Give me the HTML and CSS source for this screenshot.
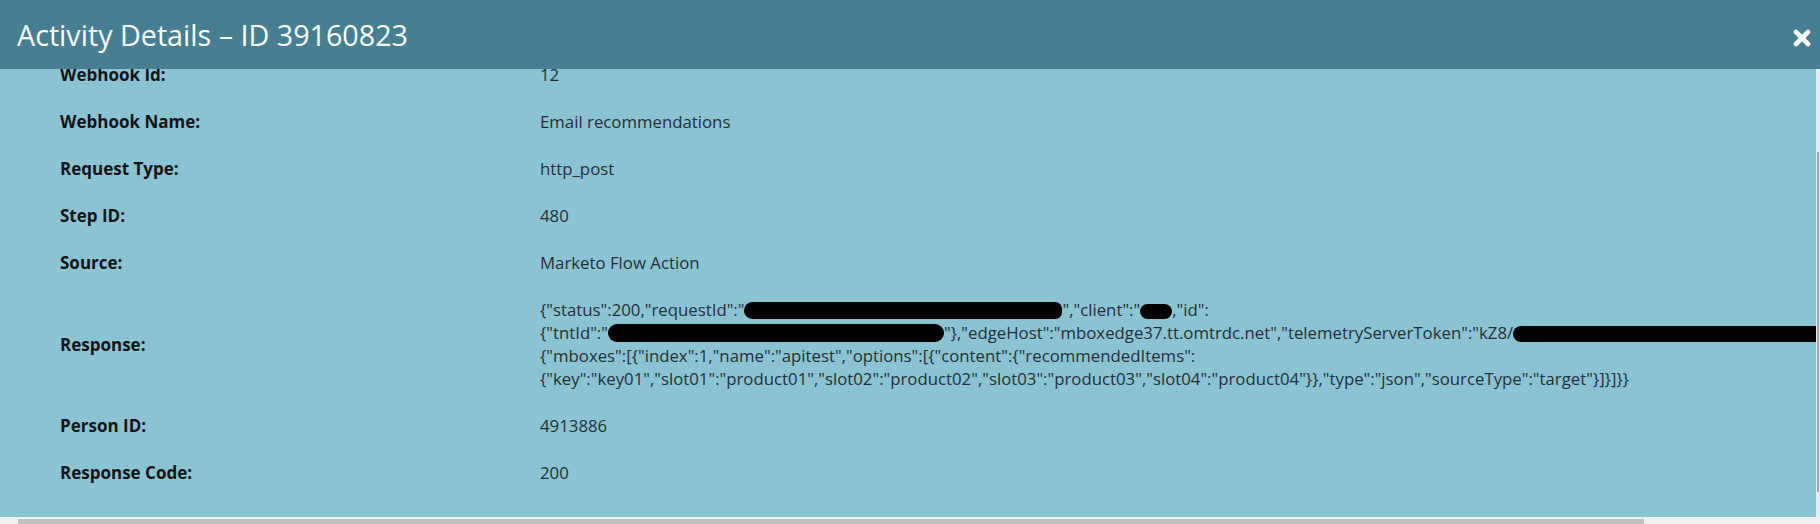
FILE: index.html
```html
<!DOCTYPE html>
<html lang="en">
<head>
<meta charset="utf-8">
<title>Activity Details</title>
<link rel="stylesheet" href="styles.css">
</head>
<body>
<div class="dialog">
  <header class="dialog-header">
    <h1 class="dialog-title">Activity Details – ID 39160823</h1>
    <button class="close-btn" aria-label="Close">
      <svg viewBox="0 0 18 18" width="18" height="18"><path d="M3 3 L15 15 M15 3 L3 15" stroke="#fff" stroke-width="4.6" stroke-linecap="round"/></svg>
    </button>
  </header>
  <div class="dialog-main">
    <div class="viewport">
      <div class="details">
        <div class="row"><div class="label">Webhook Id:</div><div class="value">12</div></div>
        <div class="row"><div class="label">Webhook Name:</div><div class="value">Email recommendations</div></div>
        <div class="row"><div class="label">Request Type:</div><div class="value">http_post</div></div>
        <div class="row"><div class="label">Step ID:</div><div class="value">480</div></div>
        <div class="row"><div class="label">Source:</div><div class="value">Marketo Flow Action</div></div>
        <div class="row"><div class="label">Response:</div>
          <div class="value json">
            <span class="line">{"status":200,"requestId":"<span class="redact r1"></span>","client":"<span class="redact r2"></span>,"id":</span>
            <span class="line">{"tntId":"<span class="redact r3"></span>"},"edgeHost":"mboxedge37.tt.omtrdc.net","telemetryServerToken":"kZ8/<span class="redact r4"></span></span>
            <span class="line">{"mboxes":[{"index":1,"name":"apitest","options":[{"content":{"recommendedItems":</span>
            <span class="line">{"key":"key01","slot01":"product01","slot02":"product02","slot03":"product03","slot04":"product04"}},"type":"json","sourceType":"target"}]}]}}</span>
          </div>
        </div>
        <div class="row"><div class="label">Person ID:</div><div class="value">4913886</div></div>
        <div class="row"><div class="label">Response Code:</div><div class="value">200</div></div>
      </div>
    </div>
    <div class="vscroll"><div class="vthumb"></div></div>
  </div>
  <div class="hscroll"><div class="hthumb"></div></div>
</div>
</body>
</html>
```
FILE: styles.css
```css
html, body {
  margin: 0;
  padding: 0;
  height: 100%;
  overflow: hidden;
  background: #8ac3d2;
  font-family: "Open Sans", "Liberation Sans", sans-serif;
}
.dialog {
  display: flex;
  flex-direction: column;
  height: 524px;
  width: 1820px;
}
.dialog-header {
  position: relative;
  z-index: 2;
  flex: 0 0 69px;
  background: #467f91;
  display: flex;
  align-items: center;
  justify-content: space-between;
  padding: 0 9px 0 17px;
}
.dialog-title {
  margin: 0;
  font-weight: 400;
  font-size: 28.7px;
  line-height: 69px;
  color: #fff;
  white-space: nowrap;
}
.close-btn {
  border: 0;
  background: none;
  padding: 0;
  width: 18px;
  height: 18px;
  margin-top: 6px;
  display: flex;
}
.dialog-main {
  flex: 1;
  display: flex;
  min-height: 0;
}
.viewport {
  flex: 1;
  overflow: hidden;
  background: #8ac3d2;
}
.details {
  margin-top: -18px;
  padding-left: 60px;
  display: grid;
  grid-template-columns: 480px auto;
  line-height: 23px;
}
.row {
  display: contents;
}
.label, .value {
  padding: 12px 0;
  display: flex;
  flex-direction: column;
  justify-content: center;
  white-space: nowrap;
}
.label {
  font-size: 17px;
  font-weight: 700;
  color: #141414;
}
.value {
  font-size: 16.8px;
  color: #253036;
}
.line {
  display: block;
}
.redact {
  display: inline-block;
  background: #000;
  height: 15px;
  border-radius: 9px;
  vertical-align: -3px;
}
.r1 { width: 318px; height: 17px; border-radius: 10px 8px 8px 10px; }
.r2 { width: 32px; }
.r3 { width: 336px; height: 18px; }
.r4 { width: 330px; height: 16px; }
.vscroll {
  flex: 0 0 4px;
  background: #e9ecec;
  display: flex;
  flex-direction: column;
  justify-content: flex-end;
  padding-bottom: 25px;
}
.vthumb {
  width: 2px;
  margin-left: 1px;
  height: 340px;
  background: #a3a7a8;
}
.hscroll {
  flex: 0 0 7px;
  box-sizing: border-box;
  background: #f0f0f0;
  padding: 2px 0 0 18px;
}
.hthumb {
  width: 1626px;
  height: 5px;
  background: #c1c1c1;
}
```
